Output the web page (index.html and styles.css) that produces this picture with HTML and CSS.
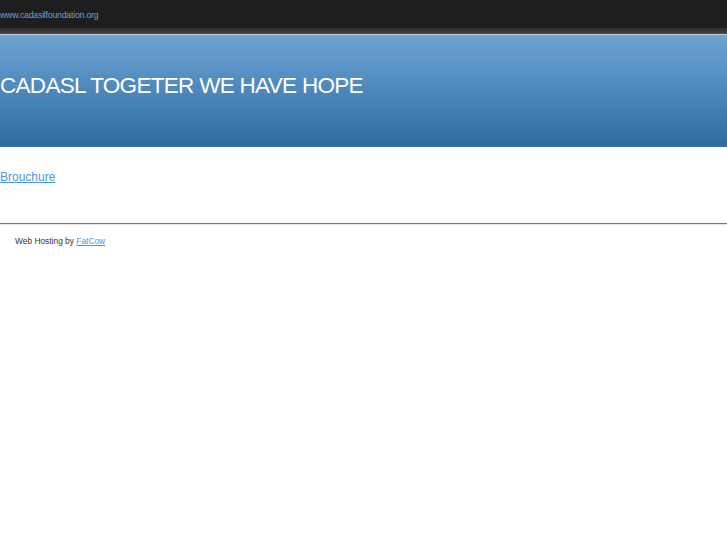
FILE: index.html
```html
<!DOCTYPE html>
<html lang="en">
<head>
<meta charset="UTF-8" />
<title>CADASL TOGETER WE HAVE HOPE</title>
<link rel="stylesheet" href="styles.css">
</head>
<body>

<div class="topbar">
  <a href="#" class="site-url">www.cadasilfoundation.org</a>
</div>
<div class="topstrip"></div>

<div class="banner">
  <h1>CADASL TOGETER WE HAVE HOPE</h1>
</div>

<div class="content">
  <a href="#" class="doc-link">Brouchure</a>
</div>

<hr class="divider">

<div class="footer">
  Web Hosting by <a href="#">FatCow</a>
</div>

</body>
</html>
```

FILE: styles.css
```css
body {
  margin: 0;
  font-family: "Liberation Sans", Arial, sans-serif;
  background: #fff;
}
.topbar {
  height: 28px;
  background: #1e1e1e;
  display: flex;
  align-items: center;
  padding-top: 1px;
  box-sizing: border-box;
}
.site-url {
  font-size: 8.7px;
  color: #6f9fd0;
  text-decoration: none;
  letter-spacing: -0.2px;
}
.topstrip {
  height: 6px;
  background: linear-gradient(#2c2c2c, #474747);
  border-bottom: 1px solid #c8ccd0;
}
.banner {
  height: 112px;
  background: linear-gradient(#6ca4d4, #2f69a0);
  display: flex;
  align-items: center;
  padding-bottom: 10px;
  box-sizing: border-box;
}
h1 {
  margin: 0;
  font-weight: normal;
  font-size: 22.5px;
  color: #fff;
  letter-spacing: -0.7px;
}
.content {
  padding: 20px 0 38px 0;
}
.doc-link {
  font-size: 12px;
  color: #4a98e0;
}
hr.divider {
  margin: 0;
  border: 0;
  border-top: 1px solid #777;
  border-bottom: 1px solid #e4e4e4;
}
.footer {
  padding: 11px 15px;
  font-size: 8.4px;
  color: #333;
}
.footer a {
  color: #4a98e0;
}
```
